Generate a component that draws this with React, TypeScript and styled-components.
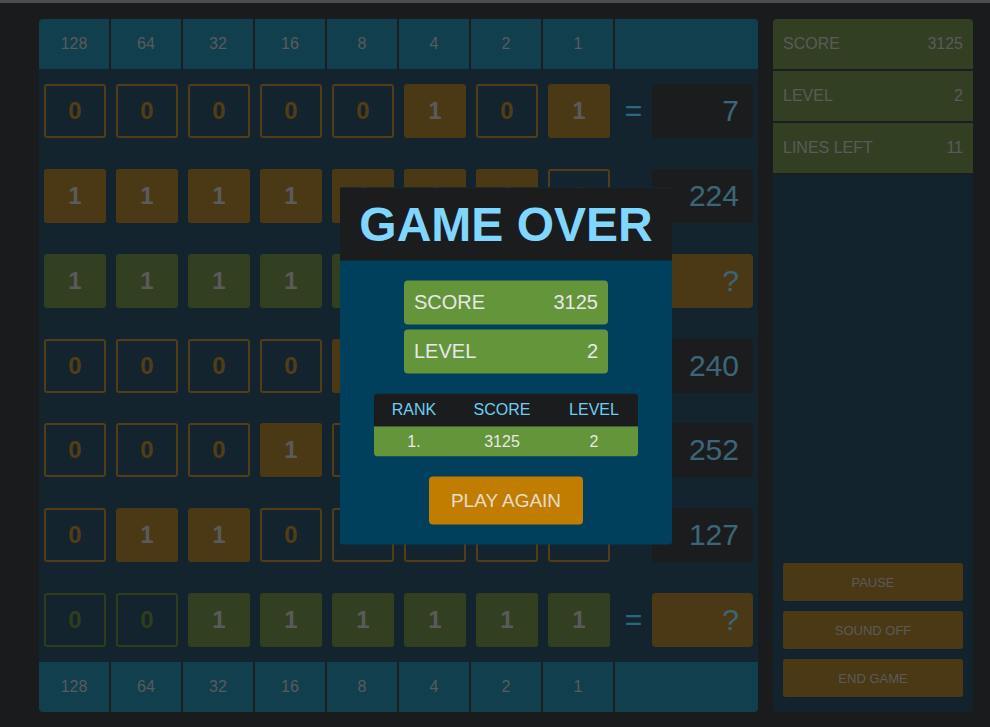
import React from "react";
import styled, { createGlobalStyle, css } from "styled-components";

const GlobalStyle = createGlobalStyle`
  html, body {
    margin: 0;
    padding: 0;
    background: #34363a;
    font-family: "Liberation Sans", Arial, sans-serif;
  }
  * {
    box-sizing: border-box;
  }
`;

const TopBar = styled.div`
  height: 3px;
  background: #959ba5;
`;

const Page = styled.div`
  padding: 16px 17px 15px 39px;
`;

const Stage = styled.div`
  position: relative;
  display: flex;
  gap: 15px;
  width: 934px;
  height: 693px;
`;

const Board = styled.div`
  width: 719px;
  display: flex;
  flex-direction: column;
  background: #26485c;
  border-radius: 4px;
  overflow: hidden;
`;

const WeightRow = styled.div`
  display: flex;
  gap: 2px;
  height: 50px;
  flex: none;
  background: #383a3e;
`;

const WeightCell = styled.div<{ $wide?: boolean }>`
  width: ${(p) => (p.$wide ? "auto" : "70px")};
  flex: ${(p) => (p.$wide ? "1" : "none")};
  background: #247e9a;
  color: #b0b4b8;
  font-size: 16px;
  display: flex;
  align-items: center;
  justify-content: center;
`;

const Lines = styled.div`
  flex: 1;
  display: flex;
  flex-direction: column;
`;

const Line = styled.div`
  flex: 1;
  display: flex;
  align-items: center;
`;

type Tone = "orange" | "green";

const tones = {
  orange: { fill: "#947228", border: "#a47a2c" },
  green: { fill: "#667e42", border: "#5e7a38" },
};

const Tile = styled.div<{ $on: boolean; $tone: Tone }>`
  width: 62px;
  height: 54px;
  margin: 0 5px;
  border-radius: 3px;
  display: flex;
  align-items: center;
  justify-content: center;
  font-size: 24px;
  font-weight: bold;
  ${(p) =>
    p.$on
      ? css`
          background: ${tones[p.$tone].fill};
          color: #b4b4b4;
        `
      : css`
          border: 2px solid ${tones[p.$tone].border};
          color: ${tones[p.$tone].border};
        `}
`;

const Equals = styled.div`
  width: 37px;
  text-align: center;
  color: #54d0ff;
  font-size: 30px;
`;

const Result = styled.div<{ $pending?: boolean }>`
  width: 101px;
  height: 54px;
  margin-right: 5px;
  border-radius: 4px;
  background: ${(p) => (p.$pending ? "#947228" : "#36383c")};
  color: #7acaf0;
  font-size: 30px;
  display: flex;
  align-items: center;
  justify-content: flex-end;
  padding-right: 14px;
`;

const Sidebar = styled.div`
  width: 200px;
  display: flex;
  flex-direction: column;
  background: #24465a;
  border-radius: 4px;
  overflow: hidden;
`;

const Stat = styled.div`
  height: 52px;
  flex: none;
  display: flex;
  align-items: center;
  justify-content: space-between;
  padding: 0 10px;
  background: #667e44;
  border-bottom: 2px solid #383a3e;
  color: #b4b4b4;
  font-size: 16px;
`;

const Controls = styled.div`
  margin-top: auto;
  display: flex;
  flex-direction: column;
  gap: 10px;
  padding: 0 10px 15px;
`;

const ControlButton = styled.button`
  height: 38px;
  border: 0;
  border-radius: 3px;
  background: #947228;
  color: #b4b4b4;
  font-family: inherit;
  font-size: 13px;
  text-transform: uppercase;
  cursor: pointer;
`;

const Backdrop = styled.div`
  position: fixed;
  inset: 0;
  background: rgba(0, 0, 0, 0.5);
  z-index: 10;
`;

const Modal = styled.div`
  position: absolute;
  top: 50%;
  left: 50%;
  transform: translate(-50%, -50%);
  width: 332px;
  z-index: 20;
  background: #00405c;
  border-radius: 0 0 3px 3px;
  display: flex;
  flex-direction: column;
  align-items: center;
  padding-bottom: 20px;
`;

const ModalTitle = styled.h1`
  margin: 0 0 20px;
  width: 100%;
  height: 73px;
  background: #1b1c1e;
  color: #7fd6ff;
  font-size: 48px;
  font-weight: bold;
  display: flex;
  align-items: center;
  justify-content: center;
`;

const Summary = styled.div`
  display: flex;
  flex-direction: column;
  gap: 5px;
  width: 204px;
`;

const SummaryRow = styled.div`
  height: 44px;
  border-radius: 4px;
  background: #64953a;
  color: #e8e8e8;
  font-size: 20px;
  display: flex;
  align-items: center;
  justify-content: space-between;
  padding: 0 10px;
`;

const Scores = styled.div`
  margin-top: 20px;
  width: 264px;
  border-radius: 4px;
  overflow: hidden;
`;

const ScoreRow = styled.div<{ $head?: boolean }>`
  display: grid;
  grid-template-columns: 80px 96px 88px;
  height: ${(p) => (p.$head ? "33px" : "30px")};
  align-items: center;
  text-align: center;
  font-size: 16px;
  background: ${(p) => (p.$head ? "#1b1c1e" : "#64953a")};
  color: ${(p) => (p.$head ? "#6fcdf5" : "#e8e8e8")};
`;

const PlayAgain = styled.button`
  margin-top: 20px;
  width: 154px;
  height: 48px;
  border: 0;
  border-radius: 4px;
  background: #c17d00;
  color: #e6dccb;
  font-family: inherit;
  font-size: 19px;
  cursor: pointer;
`;

const weights = [128, 64, 32, 16, 8, 4, 2, 1];

const rows: { bits: number[]; tone: Tone; result: string }[] = [
  { bits: [0, 0, 0, 0, 0, 1, 0, 1], tone: "orange", result: "7" },
  { bits: [1, 1, 1, 1, 1, 1, 1, 0], tone: "orange", result: "224" },
  { bits: [1, 1, 1, 1, 1, 0, 0, 0], tone: "green", result: "?" },
  { bits: [0, 0, 0, 0, 1, 1, 1, 1], tone: "orange", result: "240" },
  { bits: [0, 0, 0, 1, 0, 0, 0, 0], tone: "orange", result: "252" },
  { bits: [0, 1, 1, 0, 0, 0, 0, 0], tone: "orange", result: "127" },
  { bits: [0, 0, 1, 1, 1, 1, 1, 1], tone: "green", result: "?" },
];

const WeightHeader = () => (
  <WeightRow>
    {weights.map((w) => (
      <WeightCell key={w}>{w}</WeightCell>
    ))}
    <WeightCell $wide />
  </WeightRow>
);

const App = () => {
  return (
    <>
      <GlobalStyle />
      <TopBar />
      <Page>
        <Stage>
          <Board>
            <WeightHeader />
            <Lines>
              {rows.map((row, i) => (
                <Line key={i}>
                  {row.bits.map((b, j) => (
                    <Tile key={j} $on={b === 1} $tone={row.tone}>
                      {b}
                    </Tile>
                  ))}
                  <Equals>=</Equals>
                  <Result $pending={row.result === "?"}>{row.result}</Result>
                </Line>
              ))}
            </Lines>
            <WeightHeader />
          </Board>
          <Sidebar>
            <Stat>
              <span>SCORE</span>
              <span>3125</span>
            </Stat>
            <Stat>
              <span>LEVEL</span>
              <span>2</span>
            </Stat>
            <Stat>
              <span>LINES LEFT</span>
              <span>11</span>
            </Stat>
            <Controls>
              <ControlButton>Pause</ControlButton>
              <ControlButton>Sound off</ControlButton>
              <ControlButton>End game</ControlButton>
            </Controls>
          </Sidebar>
          <Backdrop />
          <Modal>
            <ModalTitle>GAME OVER</ModalTitle>
            <Summary>
              <SummaryRow>
                <span>SCORE</span>
                <span>3125</span>
              </SummaryRow>
              <SummaryRow>
                <span>LEVEL</span>
                <span>2</span>
              </SummaryRow>
            </Summary>
            <Scores>
              <ScoreRow $head>
                <span>RANK</span>
                <span>SCORE</span>
                <span>LEVEL</span>
              </ScoreRow>
              <ScoreRow>
                <span>1.</span>
                <span>3125</span>
                <span>2</span>
              </ScoreRow>
            </Scores>
            <PlayAgain>PLAY AGAIN</PlayAgain>
          </Modal>
        </Stage>
      </Page>
    </>
  );
};

export default App;
